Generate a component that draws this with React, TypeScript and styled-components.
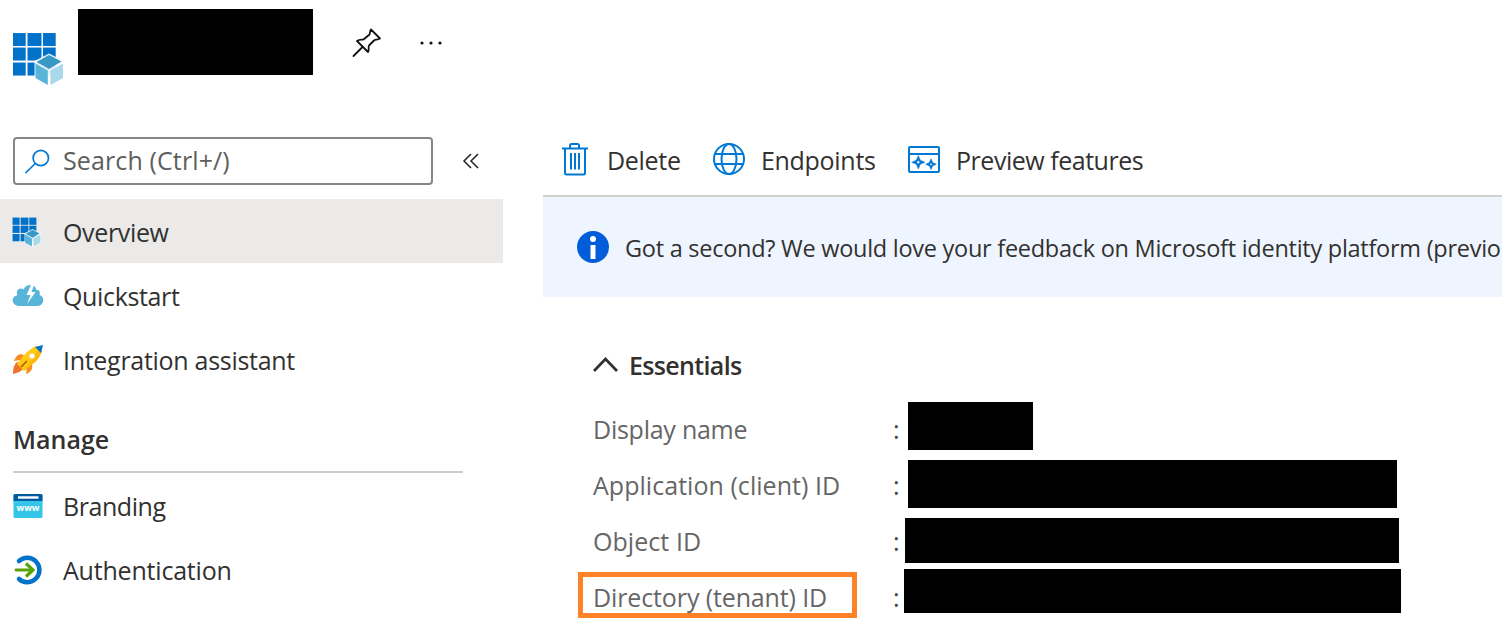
import React from "react";
import styled, { createGlobalStyle } from "styled-components";

const GlobalStyle = createGlobalStyle`
  * { box-sizing: border-box; }
  body { margin: 0; background: #fff; overflow: hidden; }
`;

const Page = styled.div`
  width: 1502px;
  height: 618px;
  overflow: hidden;
  display: flex;
  flex-direction: column;
  background: #fff;
  color: #323130;
  font-family: "Open Sans", "Noto Sans", sans-serif;
  font-size: 25px;
  svg { display: block; flex: none; }
`;

const Label = styled.span<{ $track?: number }>`
  white-space: nowrap;
  letter-spacing: ${(p) => p.$track ?? 0}px;
`;

const Header = styled.header`
  height: 127px;
  flex: none;
  display: flex;
  align-items: flex-start;
  padding: 9px 0 0 12px;
`;
const AppIconSlot = styled.div`
  padding-top: 23px;
  width: 66px;
`;
const Redaction = styled.div<{ $w: number; $h: number; $left?: number; $gap?: number }>`
  width: ${(p) => p.$w}px;
  height: ${(p) => p.$h}px;
  margin-left: ${(p) => p.$left ?? 0}px;
  margin-bottom: ${(p) => p.$gap ?? 0}px;
  background: #000;
  flex: none;
`;
const HeaderActions = styled.div`
  display: flex;
  align-items: center;
  gap: 38px;
  height: 68px;
  padding-left: 39px;
`;

const Body = styled.div`
  display: flex;
  gap: 40px;
  flex: 1;
  min-height: 0;
`;
const Sidebar = styled.nav`
  width: 503px;
  flex: none;
`;
const SearchRow = styled.div`
  display: flex;
  align-items: center;
  gap: 29px;
  padding: 10px 0 14px 13px;
`;
const SearchBox = styled.div`
  width: 420px;
  height: 48px;
  border: 2px solid #868686;
  border-radius: 4px;
  display: flex;
  align-items: center;
  gap: 12px;
  padding-left: 9px;
  color: #605e5c;
  ${Label} { padding-bottom: 2px; }
`;
const NavItem = styled.div<{ $active?: boolean }>`
  height: 64px;
  display: flex;
  align-items: center;
  padding: 2px 0 0 12px;
  background: ${(p) => (p.$active ? "#ebeae9" : "transparent")};
`;
const NavIcon = styled.div`
  width: 51px;
`;
const SectionTitle = styled.h2`
  margin: 0 40px 0 13px;
  height: 82px;
  padding-top: 17px;
  border-bottom: 2px solid #cccccc;
  font-size: 25px;
  font-weight: 600;
  line-height: 62px;
`;

const Main = styled.main`
  flex: 1;
  min-width: 0;
`;
const Toolbar = styled.div`
  height: 70px;
  display: flex;
  align-items: center;
  padding: 0 0 4px 18px;
  border-bottom: 2px solid #d2d0ce;
`;
const Command = styled.div<{ $w: number; $gap: number }>`
  width: ${(p) => p.$w}px;
  display: flex;
  align-items: center;
  gap: ${(p) => p.$gap}px;
  flex: none;
  ${Label} { padding-top: 2px; }
`;
const Banner = styled.div`
  height: 100px;
  display: flex;
  align-items: center;
  gap: 16px;
  padding-left: 34px;
  background: #eff5ff;
  font-size: 23.5px;
  ${Label} { padding-top: 1px; }
`;
const EssentialsHeader = styled.div`
  height: 103px;
  display: flex;
  align-items: center;
  gap: 11px;
  padding: 33px 0 0 50px;
  font-weight: 600;
`;
const Properties = styled.div`
  display: flex;
  padding-left: 50px;
`;
const LabelColumn = styled.div`
  width: 300px;
  color: #666;
`;
const ColonColumn = styled.div`
  width: 11px;
  color: #444;
`;
const Cell = styled.div`
  position: relative;
  height: 56px;
  display: flex;
  align-items: center;
  padding-top: 1px;
`;
const Highlight = styled.div`
  position: absolute;
  left: -15px;
  top: 4px;
  width: 279px;
  height: 46px;
  border: 5px solid #ff8228;
`;
const ValueColumn = styled.div`
  padding-top: 2px;
`;

const AppIcon = ({ size }: { size: number }) => (
  <svg width={size} height={size * 1.04} viewBox="0 0 52 54">
    <g fill="#0072c9">
      {[1, 15.5, 31].map((x) =>
        [1, 15.5, 30.5].map((y) => <rect key={`${x}-${y}`} x={x} y={y} width={x === 15.5 ? 14 : 12.7} height="13" />)
      )}
    </g>
    <path d="M22.500 29 37 21.500l16 8v17L37 55l-14.500-8.500z" fill="#fff" opacity=".9" />
    <path d="m37 23 12.500 6.500L37 37l-12.500-7z" fill="#3999c6" />
    <path d="m23.500 31.500 12.300 7V53l-12.300-7z" fill="#59b4d9" />
    <path d="m38.500 38.500 12.500-7V46l-12.500 7z" fill="#a9d8eb" />
  </svg>
);

const PinIcon = () => (
  <svg width="30" height="30" viewBox="0 0 30 30" fill="none" stroke="#111" strokeWidth="1.8" strokeLinejoin="round" strokeLinecap="round">
    <path d="M19 1.500 28 10.500C25.500 12 23 11.500 22 12.500l-5 5c-1 1.500 .5 4-1 6.500L5 13c2.500-2 5-1 6.500-1.500l6-5c1-1.500 0-3.500 1.500-5z" />
    <path d="m10.500 19-9 9" />
  </svg>
);

const DotsIcon = () => (
  <svg width="22" height="6" viewBox="0 0 22 6" fill="#111">
    <circle cx="2" cy="3" r="1.600" />
    <circle cx="11" cy="3" r="1.600" />
    <circle cx="20" cy="3" r="1.600" />
  </svg>
);

const SearchIcon = () => (
  <svg width="27" height="27" viewBox="0 0 27 27" fill="none" stroke="#0078d4" strokeWidth="1.700">
    <circle cx="16.800" cy="10" r="7.700" />
    <path d="M11.300 15.500 1.500 25" />
  </svg>
);

const CollapseIcon = () => (
  <svg width="18" height="16" viewBox="0 0 18 16" fill="none" stroke="#222" strokeWidth="1.500">
    <path d="M9 1 2 8l7 7M16 1 9 8l7 7" />
  </svg>
);

const QuickstartIcon = () => (
  <svg width="32" height="24" viewBox="0 0 32 24">
    <path d="M8 22C-1.500 22-1 11.500 5.300 11.500 3 5 9 3 11.500 5.500 14-.5 23-.5 24.500 6c3-.5 4 2 3 5 5.500 1 5 11-2 11z" fill="#59b4d9" />
    <path d="m19 1-4.500 10h4L15 20l8.500-12H19.500L22 1z" fill="#fff" />
  </svg>
);

const RocketIcon = () => (
  <svg width="32" height="32" viewBox="0 0 32 32">
    <path d="M12 11C7 9 4 12 2 17l7-1zM20 20c1 5-1 8-6 10l1-7z" fill="#f78d1e" />
    <path d="M6 18c-4 1-5 7-5 12 5-1 9-3 11-6z" fill="#ef7326" />
    <path d="M5 20 13 10c4-4 9-7 11-8l6 5c-2 5-4 9-8 12l-10 8z" fill="#ffca12" />
    <path d="M5 20c2 2 4 4 7 7L27 5l3 2c-2 5-4 9-8 12l-10 8z" fill="#f7ae00" opacity=".6" />
    <path d="M23 3 31 1l-2 8z" fill="#0072c9" />
    <circle cx="20" cy="12" r="2.800" fill="#fff" stroke="#e9c77b" strokeWidth=".6" />
    <path d="m9 23 6-6" stroke="#ba5b09" strokeWidth="1.700" />
  </svg>
);

const WwwText = styled.text`
  font: 700 8.500px "Open Sans", sans-serif;
  fill: #fff;
`;
const BrandingIcon = () => (
  <svg width="32" height="26" viewBox="0 0 32 26">
    <rect x="1.500" y="1" width="29" height="24" rx="1.500" fill="#35c5e9" />
    <path d="M1.500 8V2.500Q1.500 1 3 1h26q1.500 0 1.500 1.500V8z" fill="#005ba1" />
    <rect x="6" y="3.300" width="20.500" height="2.400" fill="#fff" />
    <WwwText x="4.500" y="17.500" textLength="23" lengthAdjust="spacingAndGlyphs">www</WwwText>
  </svg>
);

const AuthIcon = () => (
  <svg width="32" height="32" viewBox="-1.500 0 32 32" fill="none">
    <path d="M5.500 7A12.200 12.200 0 1 1 5.500 25" stroke="#0072c9" strokeWidth="4.500" strokeLinecap="round" />
    <path d="M2.500 16H19" stroke="#57a300" strokeWidth="2.800" strokeLinecap="round" />
    <path d="M12.500 9.500 19.500 16l-7 6.500" stroke="#57a300" strokeWidth="3.200" />
  </svg>
);

const TrashIcon = () => (
  <svg width="28" height="34" viewBox="0 0 28 34" fill="none" stroke="#0078d4" strokeWidth="2">
    <path d="M1 6.500h26M9 6V3.500Q9 2 10.500 2h6Q18 2 18 3.500V6M4 6.500V31q0 1.500 1.500 1.500h17Q24 32.500 24 31V6.500M10 11v16.500M14 11v16.500M18 11v16.500" />
  </svg>
);

const GlobeIcon = () => (
  <svg width="34" height="34" viewBox="0 0 34 34" fill="none" stroke="#0078d4" strokeWidth="2">
    <circle cx="17" cy="17" r="15" />
    <ellipse cx="17" cy="17" rx="7.500" ry="15" />
    <path d="M3 12h28M3 22h28" />
  </svg>
);

const PreviewIcon = () => (
  <svg width="32" height="27" viewBox="0 0 32 27" fill="none" stroke="#0078d4" strokeWidth="2">
    <rect x="1" y="1" width="30" height="25" rx="1" />
    <path d="M1 8h30" />
    <path
      d="M10.300 9.500l2 4.700 4.700 2-4.700 2-2 4.700-2-4.700-4.700-2 4.700-2zM10.300 14.500l-1.700 1.700 1.700 1.700 1.700-1.700zM23 12.800l1.700 3.700 3.700 1.700-3.700 1.700-1.700 3.700-1.700-3.700-3.700-1.700 3.700-1.700zM23 16.900l-1.300 1.300 1.300 1.300 1.300-1.300z"
      fill="#0078d4"
      fillRule="evenodd"
      strokeWidth=".5"
      strokeLinejoin="round"
    />
  </svg>
);

const InfoIcon = () => (
  <svg width="32" height="32" viewBox="0 0 32 32">
    <circle cx="16" cy="16" r="16" fill="#015cda" />
    <circle cx="16" cy="8" r="3" fill="#fff" />
    <path d="M13.500 14h5v14h-5z" fill="#fff" />
  </svg>
);

const ChevronUp = () => (
  <svg width="25" height="16" viewBox="0 0 25 16" fill="none" stroke="#323130" strokeWidth="2.700">
    <path d="M1 14 12.500 2 24 14" />
  </svg>
);

const navTop = [
  { label: "Overview", icon: <AppIcon size={29} />, active: true, track: -0.35 },
  { label: "Quickstart", icon: <QuickstartIcon />, track: -0.35 },
  { label: "Integration assistant", icon: <RocketIcon />, track: -0.29 },
];
const navManage = [
  { label: "Branding", icon: <BrandingIcon />, track: -0.45 },
  { label: "Authentication", icon: <AuthIcon />, track: -0.2 },
];
const properties = [
  { label: "Display name", track: -0.25 },
  { label: "Application (client) ID", track: 0.04 },
  { label: "Object ID", track: 0.06 },
  { label: "Directory (tenant) ID", track: -0.12, highlighted: true },
];

export default function App() {
  return (
    <Page>
      <GlobalStyle />
      <Header>
        <AppIconSlot><AppIcon size={52} /></AppIconSlot>
        <Redaction $w={235} $h={66} />
        <HeaderActions><PinIcon /><DotsIcon /></HeaderActions>
      </Header>
      <Body>
        <Sidebar>
          <SearchRow>
            <SearchBox><SearchIcon /><Label $track={0.12}>Search (Ctrl+/)</Label></SearchBox>
            <CollapseIcon />
          </SearchRow>
          {navTop.map((n) => (
            <NavItem key={n.label} $active={n.active}>
              <NavIcon>{n.icon}</NavIcon><Label $track={n.track}>{n.label}</Label>
            </NavItem>
          ))}
          <SectionTitle><Label>Manage</Label></SectionTitle>
          {navManage.map((n) => (
            <NavItem key={n.label}>
              <NavIcon>{n.icon}</NavIcon><Label $track={n.track}>{n.label}</Label>
            </NavItem>
          ))}
        </Sidebar>
        <Main>
          <Toolbar>
            <Command $w={151} $gap={18}><TrashIcon /><Label $track={-0.3}>Delete</Label></Command>
            <Command $w={196} $gap={15}><GlobeIcon /><Label $track={-0.3}>Endpoints</Label></Command>
            <Command $w={240} $gap={16}><PreviewIcon /><Label $track={-0.47}>Preview features</Label></Command>
          </Toolbar>
          <Banner>
            <InfoIcon />
            <Label $track={-0.265}>Got a second? We would love your feedback on Microsoft identity platform (previo</Label>
          </Banner>
          <EssentialsHeader><ChevronUp /><Label $track={-0.66}>Essentials</Label></EssentialsHeader>
          <Properties>
            <LabelColumn>
              {properties.map((p) => (
                <Cell key={p.label}>
                  <Label $track={p.track}>{p.label}</Label>
                  {p.highlighted && <Highlight />}
                </Cell>
              ))}
            </LabelColumn>
            <ColonColumn>{properties.map((p) => <Cell key={p.label}>:</Cell>)}</ColonColumn>
            <ValueColumn>
              <Redaction $w={125} $h={48} $left={4} $gap={10} />
              <Redaction $w={489} $h={48} $left={4} $gap={10} />
              <Redaction $w={494} $h={45} $left={1} $gap={6} />
              <Redaction $w={497} $h={44} />
            </ValueColumn>
          </Properties>
        </Main>
      </Body>
    </Page>
  );
}
